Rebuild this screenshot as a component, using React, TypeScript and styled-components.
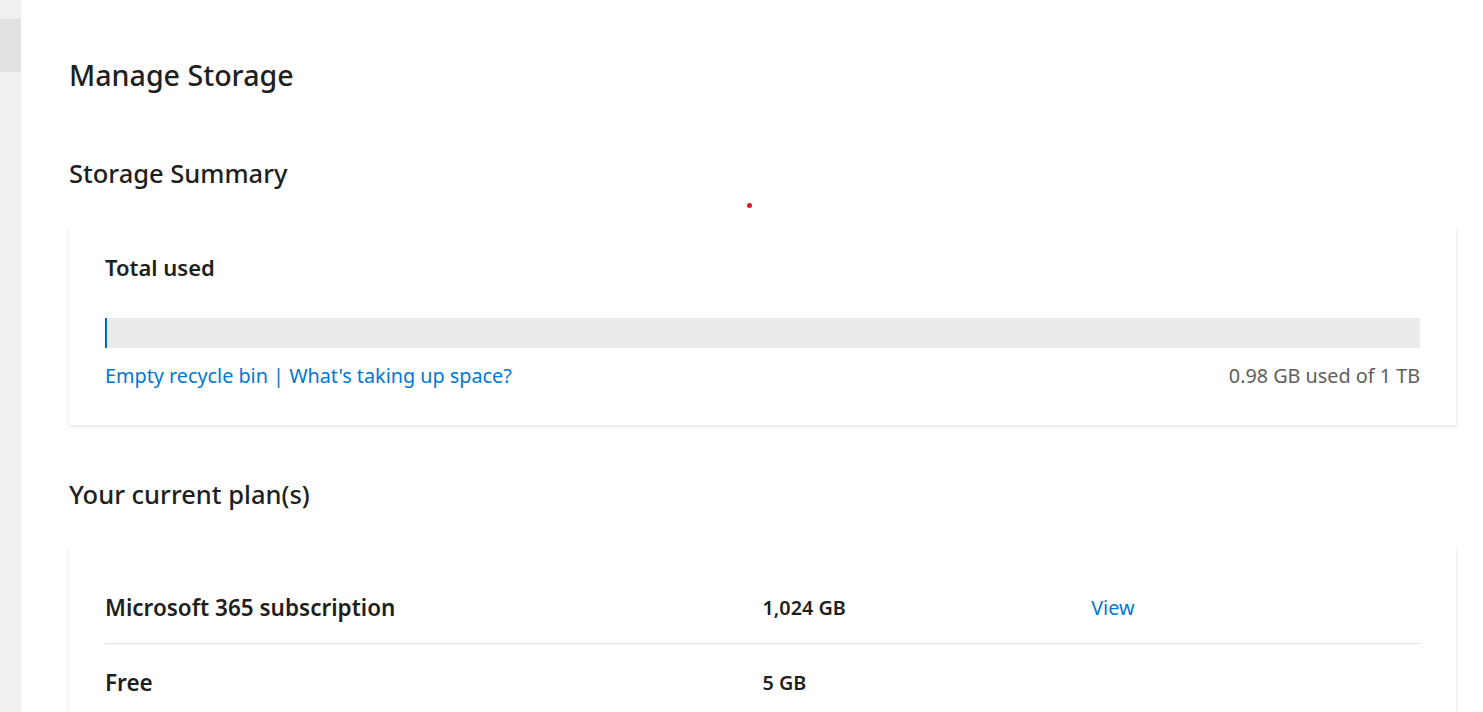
import React, { FC } from 'react'
import styled, { createGlobalStyle } from 'styled-components'

const GlobalStyle = createGlobalStyle`
  html, body {
    margin: 0;
    padding: 0;
    background: #ffffff;
    font-family: "Noto Sans", "Open Sans", Arial, sans-serif;
    color: #201f1e;
  }
`

type Plan = { name: string; size: string; link?: string }

const plans: Plan[] = [
  { name: 'Microsoft 365 subscription', size: '1,024 GB', link: 'View' },
  { name: 'Free', size: '5 GB' },
]

const usedPercent = 0.1

const App: FC = () => {
  return (
    <>
      <GlobalStyle />
      <Page>
        <Sidebar>
          <SidebarItem />
        </Sidebar>
        <Main>
          <PageTitle>Manage Storage</PageTitle>
          <SectionTitle>Storage Summary</SectionTitle>
          <Card>
            <CardTitle>Total used</CardTitle>
            <Bar>
              <BarFill style={{ width: `${usedPercent}%` }} />
            </Bar>
            <BarFooter>
              <Links>
                <Link href="#">Empty recycle bin</Link> | <Link href="#">What's taking up space?</Link>
              </Links>
              <UsedText>0.98 GB used of 1 TB</UsedText>
            </BarFooter>
          </Card>
          <SectionTitle $gap={51}>Your current plan(s)</SectionTitle>
          <PlanCard>
            {plans.map((plan, i) => (
              <PlanRow key={plan.name} $last={i === plans.length - 1}>
                <PlanName>{plan.name}</PlanName>
                <PlanSize>{plan.size}</PlanSize>
                <div>{plan.link && <Link href="#">{plan.link}</Link>}</div>
              </PlanRow>
            ))}
          </PlanCard>
          <CursorDot />
        </Main>
      </Page>
    </>
  )
}

export default App

const Page = styled.div`
  display: flex;
  height: 712px;
  overflow: hidden;
`

const Sidebar = styled.div`
  width: 21px;
  flex-shrink: 0;
  background: #f0f0f0;
  padding-top: 19px;
`

const SidebarItem = styled.div`
  height: 53px;
  background: #e1e1e1;
`

const Main = styled.div`
  position: relative;
  flex: 1;
  padding: 0 27px 0 48px;
`

const PageTitle = styled.h1`
  margin: 55px 0 0;
  font-size: 28.6px;
  line-height: 40px;
  font-weight: 500;
`

const SectionTitle = styled.h2<{ $gap?: number }>`
  margin: ${(p) => p.$gap ?? 60}px 0 0;
  font-size: 25.5px;
  line-height: 36px;
  font-weight: 500;
`

const Card = styled.div`
  margin-top: 34px;
  background: #fff;
  box-shadow: 0 1.6px 3.6px rgba(0, 0, 0, 0.13), 0 0.3px 0.9px rgba(0, 0, 0, 0.11);
  padding: 28px 36px 35px;
`

const CardTitle = styled.div`
  font-size: 22px;
  line-height: 28px;
  font-weight: 600;
`

const Bar = styled.div`
  margin-top: 37px;
  height: 30px;
  background: #ebebeb;
  border-left: 1px solid #1f4f86;
`

const BarFill = styled.div`
  height: 100%;
  background: #0078d4;
`

const BarFooter = styled.div`
  display: flex;
  justify-content: space-between;
  align-items: center;
  margin-top: 14px;
  font-size: 19.8px;
  line-height: 28px;
`

const Links = styled.div`
  color: #0078d4;
`

const Link = styled.a`
  color: #0078d4;
  text-decoration: none;
`

const UsedText = styled.div`
  color: #605e5c;
`

const PlanCard = styled(Card)`
  margin-top: 35px;
  padding: 24px 36px 0;
`

const PlanRow = styled.div<{ $last: boolean }>`
  display: grid;
  grid-template-columns: 2fr 1fr 1fr;
  align-items: center;
  height: ${(p) => (p.$last ? '76px' : '72px')};
  border-bottom: ${(p) => (p.$last ? 'none' : '1px solid #e1dfdd')};
  font-size: 19.8px;
`

const PlanName = styled.div`
  font-size: 22.5px;
  font-weight: 600;
`

const PlanSize = styled.div`
  font-weight: 600;
`

const CursorDot = styled.div`
  position: absolute;
  left: 726px;
  top: 203px;
  width: 5px;
  height: 5px;
  border-radius: 50%;
  background: #e81123;
`
